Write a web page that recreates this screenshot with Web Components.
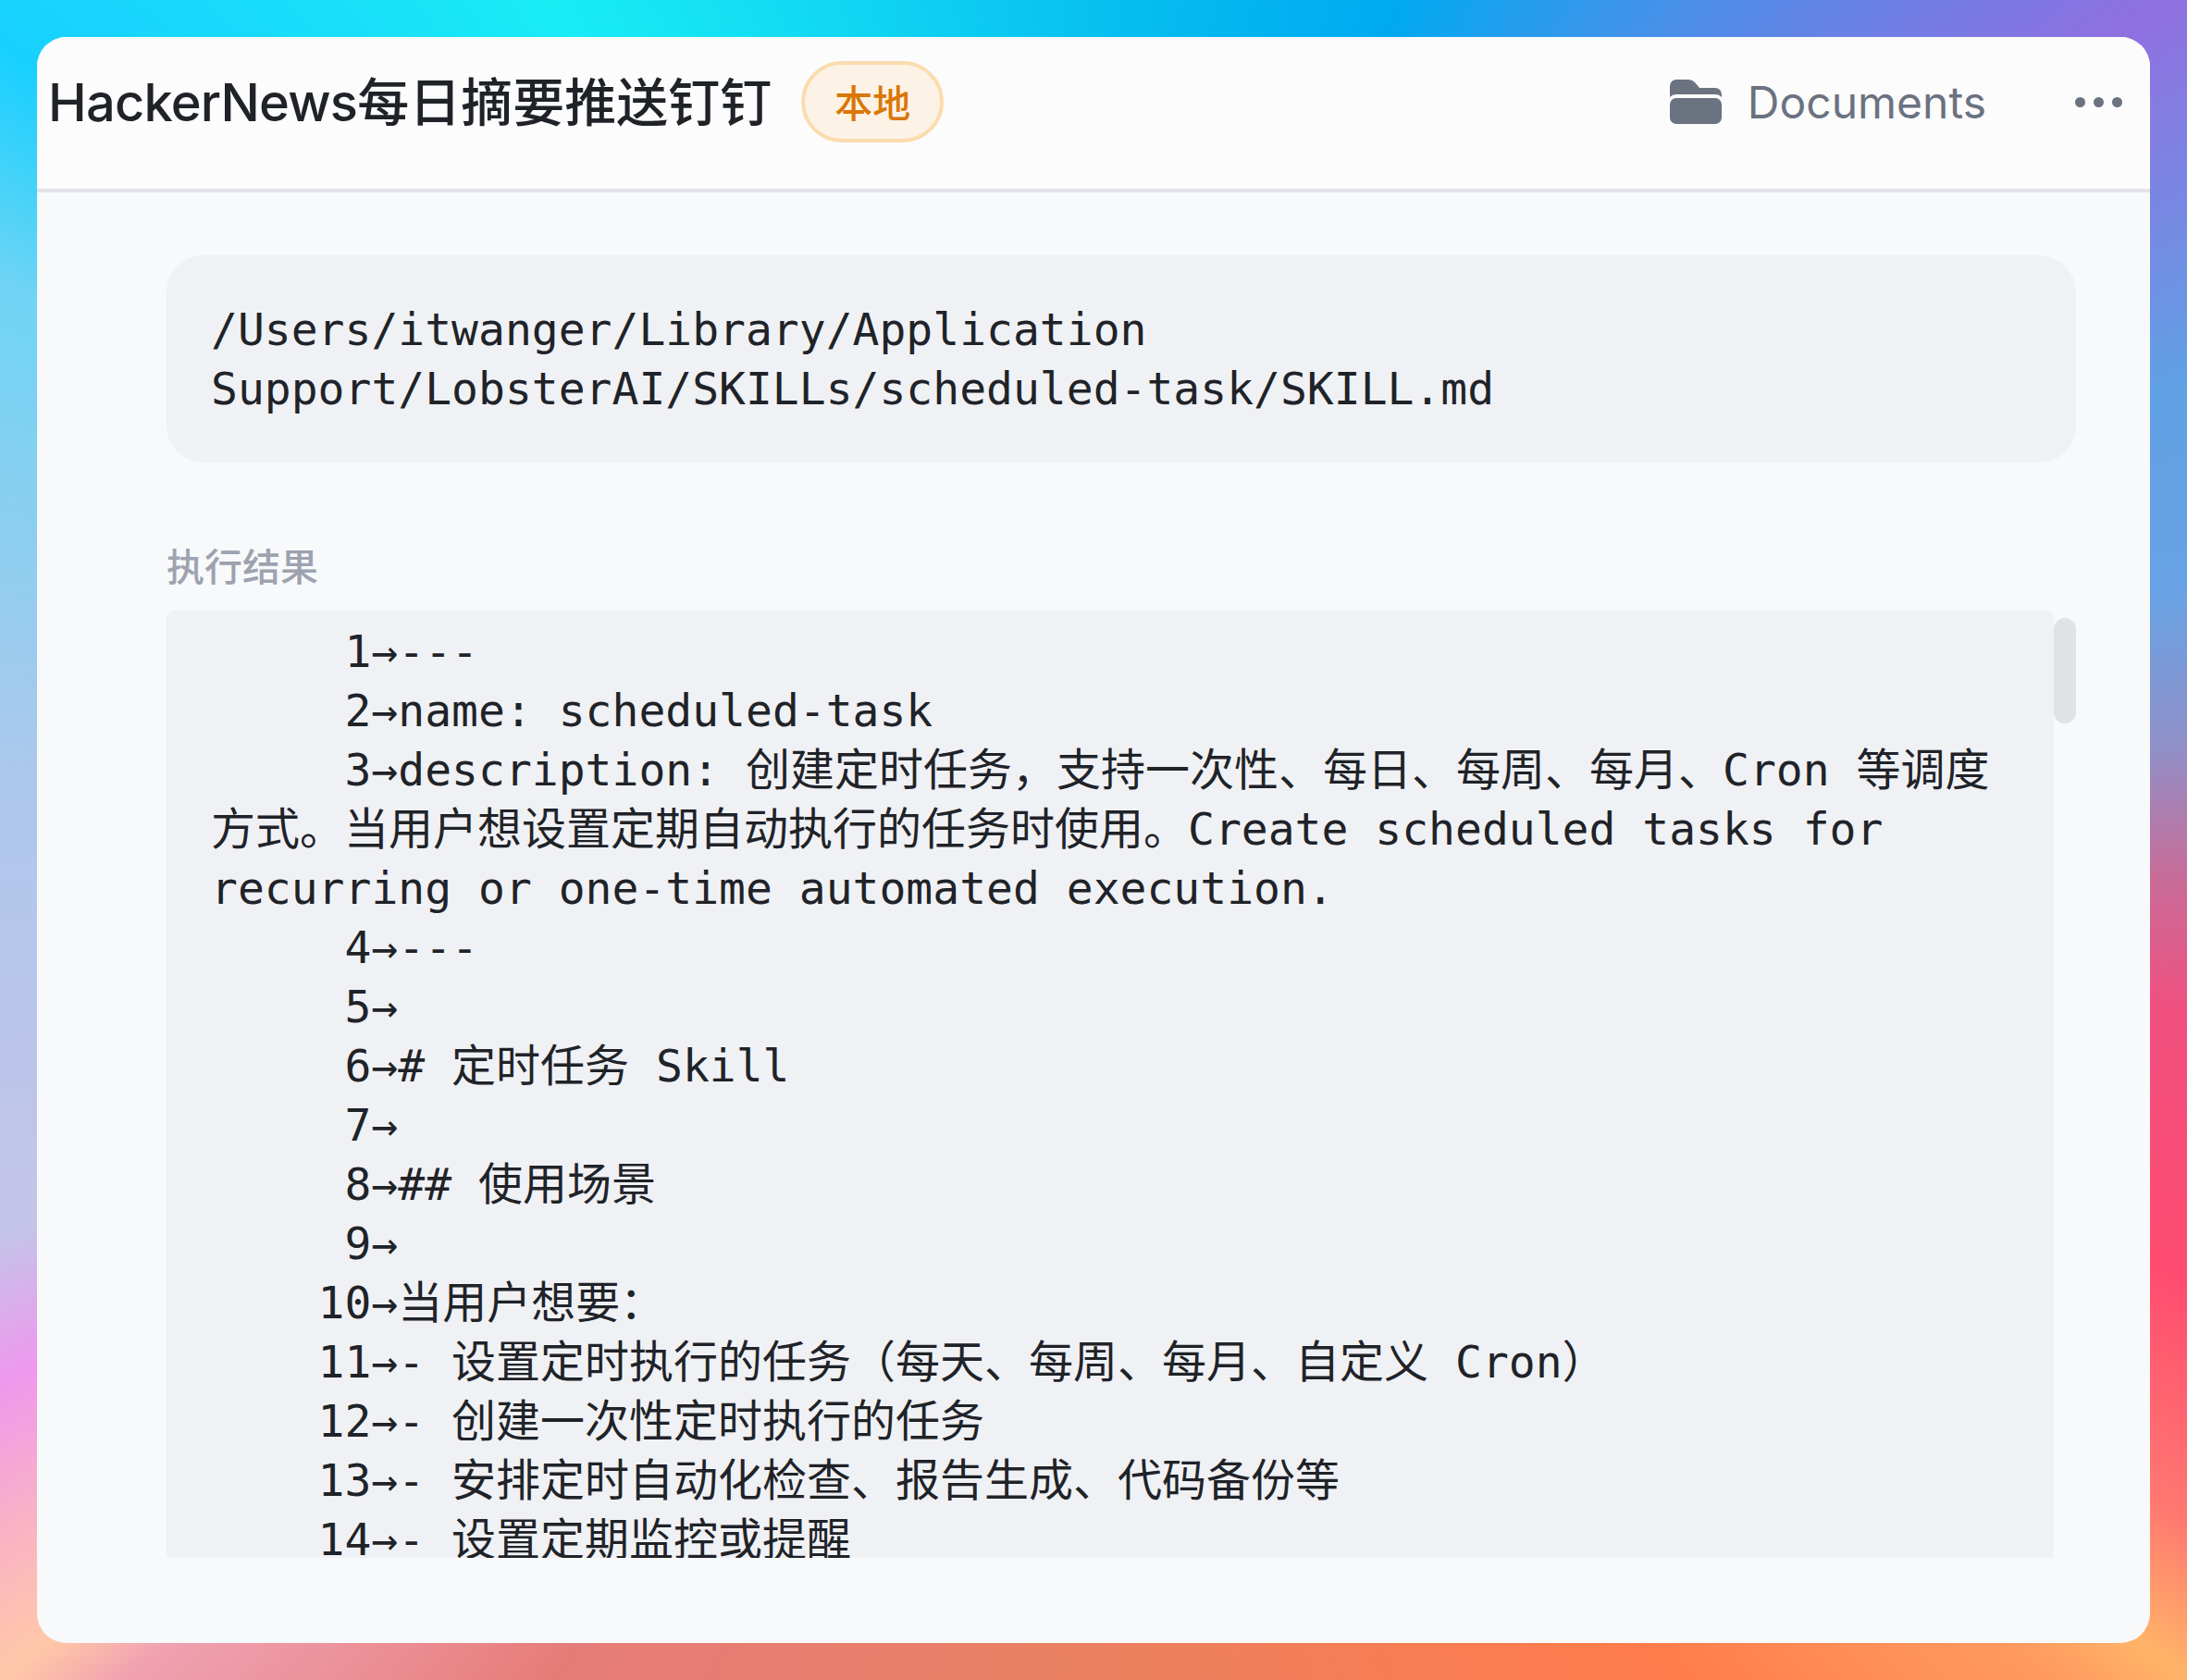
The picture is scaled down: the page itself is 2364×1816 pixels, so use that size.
<!DOCTYPE html>
<html>
<head>
<meta charset="utf-8">
<style>
  html, body { margin: 0; height: 100%; }
  body {
    height: 1816px;
    background: conic-gradient(from 0deg at 50% 50%,
      #08c0f0 0deg, #00aaf0 20deg, #4890ea 35deg, #9070e0 52deg, #60a0e4 67deg, #68a2e4 77deg, #9090c8 85deg,
      #c86c98 92deg, #f05080 99deg, #ff4c70 112deg, #ff7870 122deg, #ffb468 127.5deg, #ff9a60 131deg, #ff7c4c 145deg,
      #ea8060 180deg, #e67c78 213deg, #f0a0b0 229deg, #ffc8a8 232.5deg, #f8b0c8 238deg, #ee98ee 243.6deg,
      #c4c4e8 250deg, #acc8ec 273.6deg, #70d4f4 297deg, #18d0ff 306deg, #18ecf5 327deg, #08c0f0 360deg);
    font-family: Inter, "Noto Sans CJK SC", sans-serif;
  }
</style>
</head>
<body>
<template id="task-badge-tpl">
  <style>
    :host { display: inline-flex; }
    span {
      box-sizing: border-box; height: 88px; padding: 0 32px 2px;
      display: flex; align-items: center;
      border: 4px solid #fbdcae; border-radius: 44px; background: #fdf2e6;
      color: #d97706; font: 500 41px "Noto Sans CJK SC", sans-serif;
    }
  </style>
  <span><slot></slot></span>
</template>

<template id="task-header-tpl">
  <style>
    :host {
      display: flex; align-items: center; box-sizing: border-box; height: 168px;
      padding: 0 30px 24px 12px; border-bottom: 4px solid #e2e4ea; background: #fcfcfd;
    }
    h1 {
      margin: 0 0 8px; font: 500 56px Inter, "Noto Sans CJK SC", sans-serif; color: #1f2328; white-space: nowrap;
    }
    .badge { margin-left: 32px; }
    .place {
      margin-left: auto; display: flex; align-items: center; gap: 28px;
      font: 400 48px Inter, sans-serif; color: #6b7280;
    }
    .place svg { width: 56px; height: 48px; display: block; }
    .more { margin-left: 96px; display: flex; gap: 9px; }
    .more i { width: 11px; height: 11px; border-radius: 50%; background: #6b7280; }
  </style>
  <h1><slot name="title"></slot></h1>
  <div class="badge"><slot name="badge"></slot></div>
  <div class="place">
    <svg viewBox="0 0 56 48" fill="#6b7280">
      <path d="M0 7a7 7 0 0 1 7-7h13q4 0 7 3l5 6h17a7 7 0 0 1 7 7v3a9 9 0 0 0-7-3H7a9 9 0 0 0-7 3z"/>
      <rect x="0" y="20" width="56" height="28" rx="7"/>
    </svg>
    <span><slot name="place"></slot></span>
  </div>
  <div class="more"><i></i><i></i><i></i></div>
</template>

<template id="code-block-tpl">
  <style>
    :host {
      display: block; box-sizing: border-box; padding: 48px; background: #f0f1f5; border-radius: 40px;
      font: 48px/64px "DejaVu Sans Mono", "Noto Sans CJK SC", monospace; color: #1f2328;
    }
    pre { margin: 0; font: inherit; white-space: pre-wrap; }
  </style>
  <pre><slot></slot></pre>
</template>

<template id="result-panel-tpl">
  <style>
    :host { display: block; }
    .label { margin: 0 0 15px; height: 69px; color: #9ca3af; font: 500 41px/69px "Noto Sans CJK SC", sans-serif; }
    .row { display: flex; height: 1024px; }
    .box {
      flex: 1; min-width: 0; box-sizing: border-box; padding: 12px 48px 0; overflow: hidden;
      background: #f0f1f5; border-radius: 8px 8px 0 0;
      font: 48px/64px "DejaVu Sans Mono", "Noto Sans CJK SC", monospace; color: #1f2328;
    }
    pre { margin: 0; font: inherit; white-space: pre-wrap; }
    .track { width: 24px; padding-top: 8px; }
    .thumb { height: 114px; border-radius: 12px; background: #e1e2e7; }
  </style>
  <p class="label"><slot name="label"></slot></p>
  <div class="row">
    <div class="box"><pre><slot></slot></pre></div>
    <div class="track"><div class="thumb"></div></div>
  </div>
</template>

<template id="task-card-tpl">
  <style>
    :host {
      display: block; box-sizing: border-box; width: 2284px; height: 1736px; margin: 40px;
      border-radius: 32px; overflow: hidden; background: #f8f9fb;
    }
    .body { padding: 68px 80px 0 140px; display: flex; flex-direction: column; gap: 76px; }
  </style>
  <slot name="header"></slot>
  <div class="body"><slot></slot></div>
</template>

<task-card>
  <task-header slot="header">
    <span slot="title"><span style="letter-spacing:-.8px">HackerNews</span>每日摘要推送钉钉</span>
    <task-badge slot="badge">本地</task-badge>
    <span slot="place">Documents</span>
  </task-header>
  <code-block>/Users/itwanger/Library/Application Support/LobsterAI/SKILLs/scheduled-task/SKILL.md</code-block>
  <result-panel><span slot="label">执行结果</span>     1→---
     2→name: scheduled-task
     3→description: 创建定时任务，支持一次性、每日、每周、每月、Cron 等调度方式。当用户想设置定期自动执行的任务时使用。Create scheduled tasks for recurring or one-time automated execution.
     4→---
     5→
     6→# 定时任务 Skill
     7→
     8→## 使用场景
     9→
    10→当用户想要：
    11→- 设置定时执行的任务（每天、每周、每月、自定义 Cron）
    12→- 创建一次性定时执行的任务
    13→- 安排定时自动化检查、报告生成、代码备份等
    14→- 设置定期监控或提醒</result-panel>
</task-card>

<script>
  function shadowFrom(el, id) {
    const root = el.attachShadow({ mode: "open" });
    root.appendChild(document.getElementById(id).content.cloneNode(true));
  }

  class TaskCard extends HTMLElement {
    constructor() { super(); shadowFrom(this, "task-card-tpl"); }
  }
  class TaskHeader extends HTMLElement {
    constructor() { super(); shadowFrom(this, "task-header-tpl"); }
  }
  class TaskBadge extends HTMLElement {
    constructor() { super(); shadowFrom(this, "task-badge-tpl"); }
  }
  class CodeBlock extends HTMLElement {
    constructor() { super(); shadowFrom(this, "code-block-tpl"); }
  }
  class ResultPanel extends HTMLElement {
    constructor() { super(); shadowFrom(this, "result-panel-tpl"); }
  }

  customElements.define("task-card", TaskCard);
  customElements.define("task-header", TaskHeader);
  customElements.define("task-badge", TaskBadge);
  customElements.define("code-block", CodeBlock);
  customElements.define("result-panel", ResultPanel);
</script>
</body>
</html>
